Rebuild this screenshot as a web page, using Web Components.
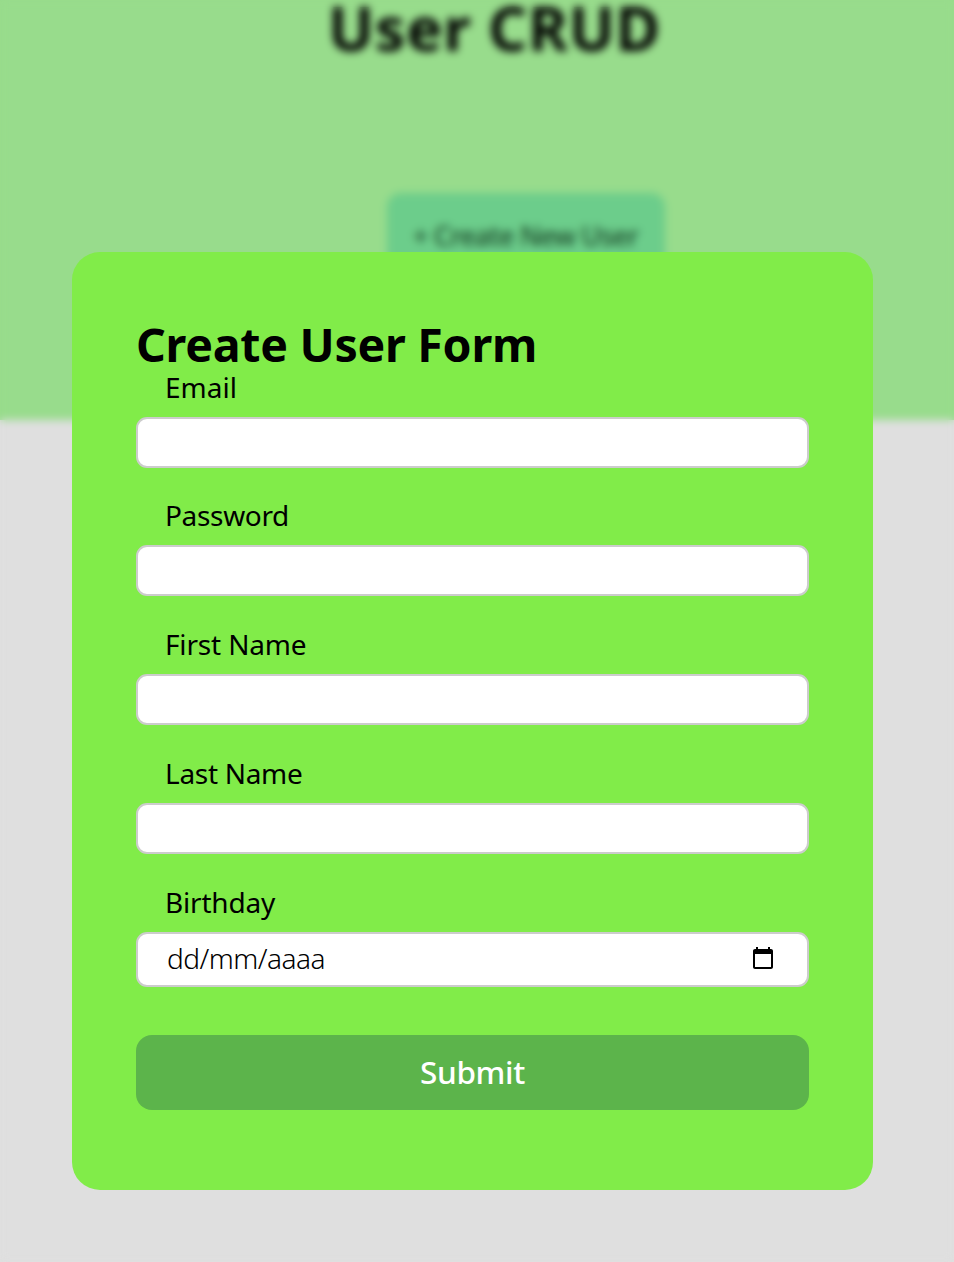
<!DOCTYPE html>
<html lang="en">
<head>
<meta charset="utf-8">
<title>User CRUD</title>
<style>
  html, body { margin: 0; height: 100%; overflow: hidden; background: #dfdfdf; }
  body { font-family: "Noto Sans", "Open Sans", sans-serif; color: #000; }
</style>
</head>
<body>
<user-page></user-page>
<modal-overlay>
  <user-form>
    <form-field>Email</form-field>
    <form-field type="password">Password</form-field>
    <form-field>First Name</form-field>
    <form-field>Last Name</form-field>
    <form-field type="date">Birthday</form-field>
  </user-form>
</modal-overlay>
<script>
const define = (name, html, setup) => {
  const template = document.createElement('template');
  template.innerHTML = html;
  customElements.define(name, class extends HTMLElement {
    constructor() {
      super();
      this.attachShadow({ mode: 'open' }).append(template.content.cloneNode(true));
    }
    connectedCallback() { if (setup) setup(this); }
  });
};

/* A single line of text, tracked so that it spans the given width. */
define('text-run', `<style>:host { display: inline-block; white-space: nowrap; }</style><slot></slot>`,
  el => {
    const target = Number(el.getAttribute('span'));
    if (!target) return;
    const count = el.textContent.length;
    el.style.letterSpacing = (target - el.getBoundingClientRect().width) / count + 'px';
  });

define('user-page', `
  <style>
    :host { display: block; }
    header { height: 420px; background: #98dc8c; display: flex; flex-direction: column; align-items: center; box-sizing: border-box; }
    h1 { margin: 0; padding-left: 35px; height: 193px; font-size: 61px; line-height: 56px; font-weight: 700; color: #000; }
    button { margin: 0 0 0 97px; width: 278px; height: 84px; padding: 0; border: 0; border-radius: 14px; background: #6ccd8b;
      font: 500 27px/83px "Noto Sans", sans-serif; color: #1d4a2c; }
  </style>
  <header>
    <h1><text-run span="333">User CRUD</text-run></h1>
    <button><text-run span="225">+ Create New User</text-run></button>
  </header>`);

define('modal-overlay', `
  <style>
    :host { position: fixed; inset: 0; box-sizing: border-box; padding: 252px 81px 72px 72px; backdrop-filter: blur(4px); }
  </style><slot></slot>`);

define('user-form', `
  <style>
    :host { display: block; box-sizing: border-box; height: 938px; padding: 64px; border-radius: 28px; background: #81ec49; }
    h2 { margin: 0; height: 54.6px; font-size: 46.5px; line-height: 56px; font-weight: 700; }
    .fields { display: flex; flex-direction: column; gap: 31.75px; }
    button { display: block; width: 100%; height: 75px; margin: 48px 0 0; padding: 0 0 2px; border: 0; border-radius: 16px;
      background: #5cb44b; color: #fff; font: 500 31.5px/73px "Noto Sans", sans-serif; }
  </style>
  <h2><text-run span="401">Create User Form</text-run></h2>
  <div class="fields"><slot></slot></div>
  <button><text-run span="105">Submit</text-run></button>`);

define('form-field', `
  <style>
    :host { display: block; }
    label { display: block; height: 32px; padding-left: 29px; margin-bottom: 14px; font-size: 28px; line-height: 32px; }
    input, .date { display: flex; align-items: center; justify-content: space-between; box-sizing: border-box; width: 100%; height: 51px;
      margin: 0; padding: 0 29px; border: 2px solid #ccc; border-radius: 11px; background: #fff; outline: 0; font: 300 28px "Noto Sans", sans-serif; }
    .date { height: 55px; padding: 0 32px 3px 29px; }
    svg { display: block; }
  </style>
  <label><text-run></text-run></label>
  <input>`,
  el => {
    const spans = { 'Email': 72, 'Password': 124, 'First Name': 141.500, 'Last Name': 137.500, 'Birthday': 110 };
    const text = el.textContent.trim();
    const run = document.createElement('text-run');
    run.textContent = text;
    run.setAttribute('span', spans[text]);
    el.shadowRoot.querySelector('text-run').replaceWith(run);
    const input = el.shadowRoot.querySelector('input');
    if (el.getAttribute('type') === 'date') {
      const box = document.createElement('div');
      box.className = 'date';
      box.innerHTML = `<text-run span="158">dd/mm/aaaa</text-run>
        <svg width="24" height="24" viewBox="0 0 24 24"><path d="M20 3h-1V1h-2v2H7V1H5v2H4c-1.1 0-2 .9-2 2v16c0 1.100.9 2 2 2h16c1.100 0 2-.9 2-2V5c0-1.100-.9-2-2-2zm0 18H4V8h16v13z"/></svg>`;
      input.replaceWith(box);
    } else input.type = el.getAttribute('type') || 'text';
  });
</script>
</body>
</html>
